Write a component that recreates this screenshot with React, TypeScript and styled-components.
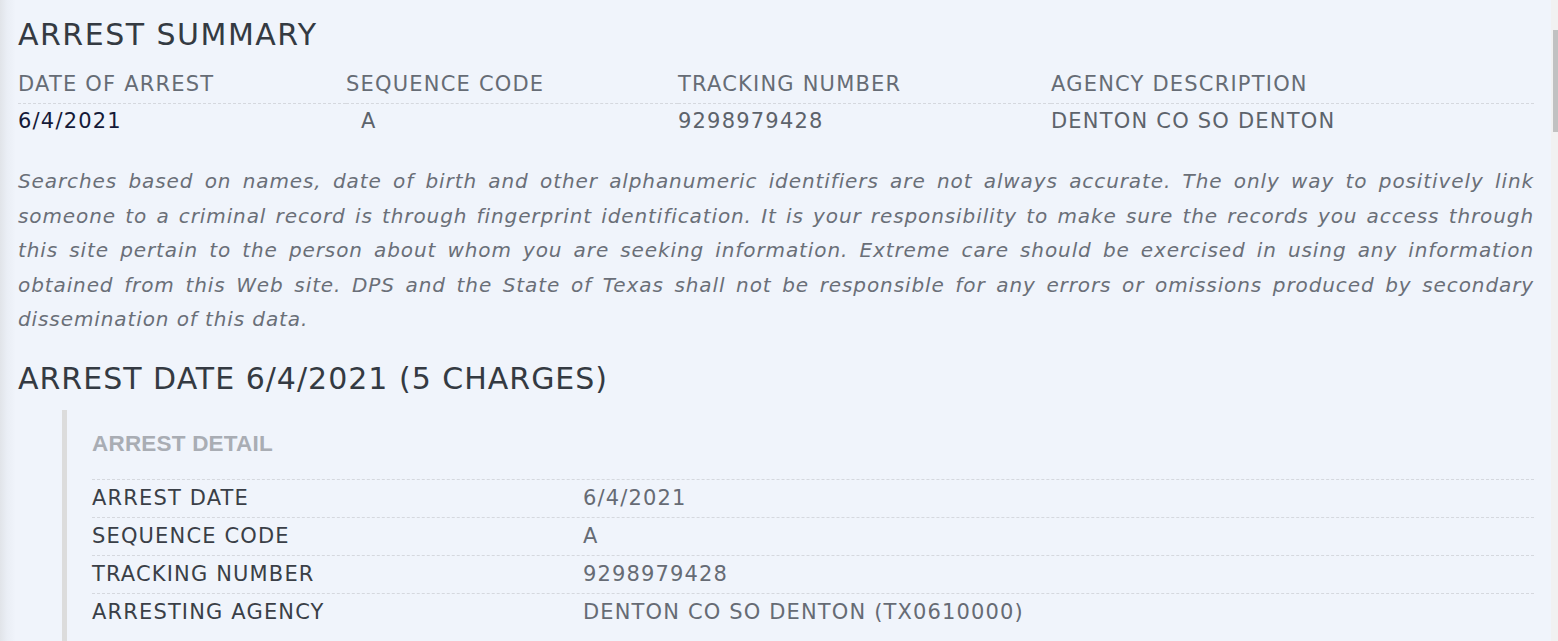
import React from "react";
import styled, { createGlobalStyle } from "styled-components";

const GlobalStyle = createGlobalStyle`
  html, body { margin: 0; padding: 0; background: #f0f4fb; }
  body { font-family: "DejaVu Sans", "Liberation Sans", sans-serif; }
  #root { height: 641px; overflow: hidden; }
  *, *::before, *::after { box-sizing: border-box; }
`;

const Page = styled.div`
  display: flex;
  height: 641px;
  overflow: hidden;
  background: #f0f4fb;
`;

const Main = styled.main`
  flex: 1;
  min-width: 0;
  padding: 17px 17px 0 18px;
  background: linear-gradient(to right, #e1e4e9 0px, #eaeef5 7px, #f0f4fb 16px);
`;

const ScrollRail = styled.div`
  width: 7px;
  flex: none;
  background: #f1f1f1;
  display: flex;
  justify-content: flex-end;
`;

const ScrollThumb = styled.div`
  width: 5px;
  height: 102px;
  margin-top: 30px;
  background: #c1c1c1;
`;

const Title = styled.h2`
  margin: 0;
  font-size: 30px;
  line-height: 36px;
  font-weight: 400;
  color: #343a42;
  letter-spacing: 1.5px;
`;

const SummaryGrid = styled.div`
  display: grid;
  grid-template-columns: 328px 332px 373px 1fr;
  margin-top: 13px;
`;

const Cell = styled.div<{ $head?: boolean; $strong?: boolean; $indent?: boolean }>`
  height: 38px;
  line-height: ${(p) => (p.$head ? "37px" : "35px")};
  font-size: 21px;
  letter-spacing: 1.2px;
  white-space: nowrap;
  padding-left: ${(p) => (p.$indent ? "15px" : "0")};
  color: ${(p) => (p.$strong ? "#151a38" : p.$head ? "#666c75" : "#5d636b")};
  border-bottom: ${(p) => (p.$head ? "1px dashed #d5d8de" : "none")};
`;

const Disclaimer = styled.p`
  margin: 22px 0 0;
  font-style: italic;
  font-size: 20px;
  line-height: 34.5px;
  color: #6a6f78;
  letter-spacing: 0.9px;
`;

const Line = styled.span<{ $last?: boolean }>`
  display: block;
  white-space: nowrap;
  text-align: ${(p) => (p.$last ? "left" : "justify")};
  text-align-last: ${(p) => (p.$last ? "left" : "justify")};
`;

const SubTitle = styled.h2`
  margin: 24px 0 0;
  font-size: 30px;
  line-height: 36px;
  font-weight: 400;
  color: #343a42;
  letter-spacing: 1px;
`;

const Quote = styled.section`
  margin: 13px 0 0 44px;
  border-left: 5px solid #dcdcdc;
  padding: 22px 0 40px 25px;
`;

const DetailHeading = styled.h3`
  margin: 0;
  font-family: "Liberation Sans", "DejaVu Sans", sans-serif;
  font-size: 22.5px;
  line-height: 24px;
  font-weight: 700;
  color: #a9adb4;
  letter-spacing: 0.2px;
`;

const DetailTable = styled.div`
  margin-top: 23px;
`;

const DetailRow = styled.div`
  display: grid;
  grid-template-columns: 491px 1fr;
  height: 38px;
  line-height: 37px;
  border-top: 1px dashed #d5d8de;
  font-size: 21px;
  letter-spacing: 1.15px;
  white-space: nowrap;
`;

const DetailLabel = styled.span`
  color: #3a3f47;
`;

const DetailValue = styled.span`
  color: #666b74;
`;

const lines = [
  "Searches based on names, date of birth and other alphanumeric identifiers are not always accurate. The only way to positively link",
  "someone to a criminal record is through fingerprint identification. It is your responsibility to make sure the records you access through",
  "this site pertain to the person about whom you are seeking information. Extreme care should be exercised in using any information",
  "obtained from this Web site. DPS and the State of Texas shall not be responsible for any errors or omissions produced by secondary",
  "dissemination of this data.",
];

const details: [string, string][] = [
  ["ARREST DATE", "6/4/2021"],
  ["SEQUENCE CODE", "A"],
  ["TRACKING NUMBER", "9298979428"],
  ["ARRESTING AGENCY", "DENTON CO SO DENTON (TX0610000)"],
];

export default function App() {
  return (
    <>
      <GlobalStyle />
      <Page>
        <Main>
          <Title>ARREST SUMMARY</Title>
          <SummaryGrid>
            <Cell $head>DATE OF ARREST</Cell>
            <Cell $head>SEQUENCE CODE</Cell>
            <Cell $head>TRACKING NUMBER</Cell>
            <Cell $head>AGENCY DESCRIPTION</Cell>
            <Cell $strong>6/4/2021</Cell>
            <Cell $indent>A</Cell>
            <Cell>9298979428</Cell>
            <Cell>DENTON CO SO DENTON</Cell>
          </SummaryGrid>
          <Disclaimer>
            {lines.map((l, i) => (
              <Line key={i} $last={i === lines.length - 1}>
                {l}
              </Line>
            ))}
          </Disclaimer>
          <SubTitle>ARREST DATE 6/4/2021 (5 CHARGES)</SubTitle>
          <Quote>
            <DetailHeading>ARREST DETAIL</DetailHeading>
            <DetailTable>
              {details.map(([k, v]) => (
                <DetailRow key={k}>
                  <DetailLabel>{k}</DetailLabel>
                  <DetailValue>{v}</DetailValue>
                </DetailRow>
              ))}
            </DetailTable>
          </Quote>
        </Main>
        <ScrollRail>
          <ScrollThumb />
        </ScrollRail>
      </Page>
    </>
  );
}
